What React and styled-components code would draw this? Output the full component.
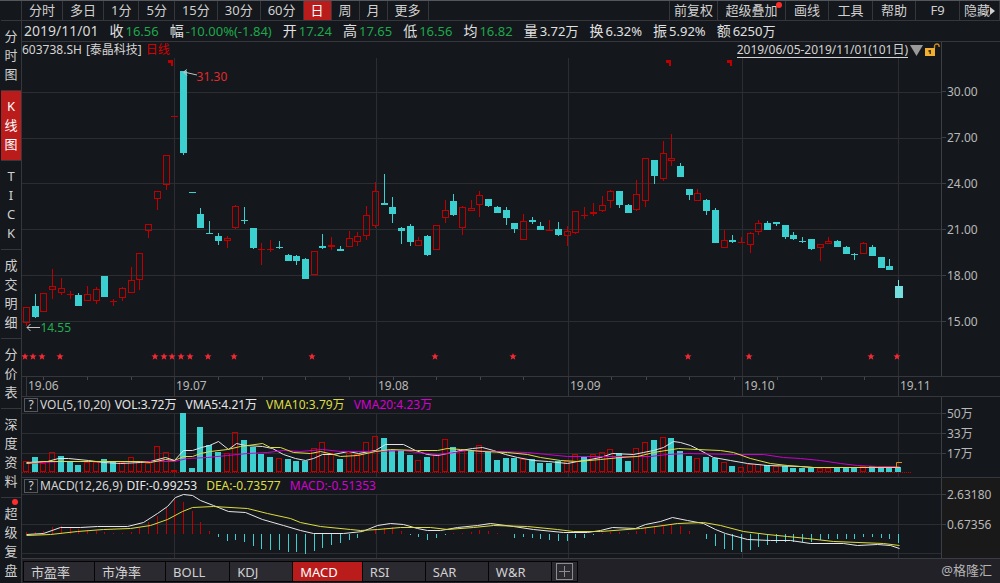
import React, { useState } from "react";
import styled, { createGlobalStyle, css } from "styled-components";

const UP = "#c00000";
const DOWN = "#3ccfcf";
const GRID = "#2b2d31";

const periods = ["分时", "多日", "1分", "5分", "15分", "30分", "60分", "日", "周", "月", "更多"];

const tools = [
  { name: "前复权", width: 48 },
  { name: "超级叠加", width: 68, isNew: true },
  { name: "画线", width: 43 },
  { name: "工具", width: 44 },
  { name: "帮助", width: 43 },
  { name: "F9", width: 44 },
  { name: "隐藏", width: 40, arrow: true },
];

const views = ["分时图", "K线图", "TICK", "成交明细", "分价表", "深度资料", "超级复盘"];

const indicators = ["市盈率", "市净率", "BOLL", "KDJ", "MACD", "RSI", "SAR", "W&R"];

const quote = [
  ["收", "16.56", "down"],
  ["幅", "-10.00%(-1.84)", "down"],
  ["开", "17.24", "down"],
  ["高", "17.65", "down"],
  ["低", "16.56", "down"],
  ["均", "16.82", "down"],
  ["量", "3.72万"],
  ["换", "6.32%"],
  ["振", "5.92%"],
  ["额", "6250万"],
];

// [색, 고가, 몸통 위, 몸통 아래, 저가]  u = 상승, d = 하락
const candles = [
  ["u", 307, 307, 323, 326], ["d", 294, 306, 317, 318], ["u", 293, 293, 312, 312], ["u", 269, 286, 290, 299],
  ["u", 278, 288, 293, 295], ["u", 291, 294, 295, 299], ["d", 293, 295, 306, 306], ["u", 286, 294, 301, 301],
  ["u", 287, 289, 301, 304], ["d", 276, 276, 297, 297], ["u", 299, 301, 302, 306], ["u", 287, 288, 298, 301],
  ["u", 267, 280, 293, 293], ["u", 253, 253, 280, 290], ["u", 224, 224, 231, 238], ["u", 191, 191, 199, 210],
  ["u", 155, 155, 185, 190], ["u", 116, 116, 117, 117], ["d", 71, 71, 153, 155], ["d", 192, 192, 193, 193],
  ["d", 208, 214, 228, 228], ["d", 221, 233, 234, 234], ["d", 233, 236, 241, 245], ["u", 236, 238, 241, 248],
  ["u", 205, 206, 228, 229], ["d", 207, 220, 221, 224], ["d", 228, 228, 248, 249], ["u", 243, 249, 250, 265],
  ["u", 240, 249, 250, 252], ["d", 241, 247, 248, 249], ["d", 254, 255, 261, 261], ["d", 255, 256, 261, 265],
  ["d", 258, 259, 279, 279], ["u", 251, 251, 275, 275], ["d", 234, 246, 248, 249], ["u", 237, 245, 247, 250],
  ["d", 246, 249, 251, 251], ["u", 231, 238, 247, 247], ["u", 232, 236, 242, 246], ["u", 206, 215, 236, 240],
  ["u", 182, 191, 226, 228], ["d", 174, 203, 205, 205], ["d", 197, 207, 214, 223], ["d", 227, 228, 231, 244],
  ["d", 224, 226, 242, 246], ["u", 237, 240, 246, 246], ["d", 235, 236, 255, 256], ["u", 225, 225, 250, 250],
  ["u", 200, 210, 218, 223], ["d", 194, 201, 215, 216], ["u", 206, 207, 228, 235], ["u", 200, 208, 211, 211],
  ["u", 191, 195, 205, 217], ["d", 199, 199, 206, 207], ["d", 206, 207, 213, 213], ["d", 207, 210, 218, 225],
  ["d", 223, 223, 229, 233], ["u", 214, 221, 240, 240], ["d", 217, 220, 222, 224], ["d", 222, 226, 230, 230],
  ["u", 220, 230, 231, 231], ["d", 222, 229, 235, 236], ["u", 226, 231, 236, 246], ["u", 211, 211, 233, 234],
  ["u", 207, 215, 216, 219], ["u", 203, 212, 214, 216], ["u", 196, 205, 211, 212], ["u", 190, 191, 201, 208],
  ["d", 191, 191, 205, 208], ["d", 204, 205, 213, 213], ["u", 180, 194, 210, 211], ["u", 158, 158, 201, 207],
  ["d", 160, 160, 176, 184], ["u", 141, 153, 179, 181], ["u", 134, 158, 161, 166], ["d", 163, 166, 177, 177],
  ["d", 189, 189, 195, 200], ["u", 189, 193, 201, 201], ["d", 199, 200, 211, 215], ["d", 208, 210, 243, 243],
  ["u", 230, 240, 248, 248], ["d", 235, 240, 242, 243], ["u", 237, 242, 243, 243], ["u", 232, 233, 245, 253],
  ["u", 220, 223, 232, 235], ["d", 221, 223, 230, 230], ["d", 222, 222, 224, 226], ["d", 225, 225, 237, 239],
  ["d", 232, 235, 239, 240], ["d", 237, 241, 242, 243], ["d", 239, 239, 249, 250], ["u", 244, 244, 248, 261],
  ["u", 237, 241, 244, 244], ["d", 240, 241, 247, 247], ["d", 246, 247, 254, 254], ["d", 253, 254, 255, 260],
  ["u", 242, 243, 254, 254], ["d", 245, 247, 256, 256], ["d", 257, 257, 268, 268], ["d", 259, 266, 270, 270],
  ["d", 280, 286, 298, 298],
];

const volumes =
  "u461 d457 u463 u452 d456 d461 d465 u462 u462 d459 d462 u462 u457 u462 u463 u446 u452 u470 d413 d468 " +
  "d427 d445 d452 u453 u432 d440 d447 d454 d457 u458 d459 d461 d461 u448 u442 u453 d459 u453 u454 u442 " +
  "u436 d438 d450 d450 d455 u460 d457 u454 u439 d447 u450 d450 u445 d452 d460 d458 d458 u459 d459 d463 " +
  "d463 d461 u461 u454 d456 u454 u452 u449 d453 d461 u448 u442 d440 u437 d438 d451 d456 u458 d457 d458 " +
  "u462 d466 u467 u464 u464 d465 u466 d466 d468 d468 d468 u468 u468 d467 d467 d467 u466 d466 d467 d467 d467";

const macdBars = [
  2, 2, 3, 7, 8, 7, 5, 4, 3, 2, 1, 1, 2, 6, 12, 18, 26, 34, 32, 23, 12, 3, -3, -7, -6, -8, -12, -15, -16, -16, -18,
  -18, -20, -17, -14, -11, -9, -6, -4, 0, 5, 6, 7, 3, -1, -3, -6, -4, -1, 1, 1, 2, 4, 3, 1, 0, -4, -3, -4, -5, -6,
  -7, -7, -4, -4, -1, 1, 2, 2, 1, 3, 7, 8, 10, 10, 8, 3, 0, -5, -12, -15, -16, -18, -16, -13, -11, -9, -8, -8, -8,
  -8, -6, -5, -5, -5, -5, -3, -3, -4, -5, -9,
];

const vma5 =
  "26,462 47,461 58,458 68,458 88,460 103,462 120,463 140,462 150,461 165,457 174,460 183,450 192,450 201,447 " +
  "209,445 218,441 228,449 236,443 245,445 262,446 272,448 283,454 295,458 305,460 313,458 322,454 333,454 " +
  "348,451 358,453 375,450 385,444 403,444 415,450 427,454 437,455 447,453 460,450 472,448 482,447 493,450 " +
  "505,454 517,457 533,460 548,461 567,463 577,461 590,459 600,457 612,453 633,454 643,452 653,450 663,447 " +
  "673,441 680,442 690,445 700,450 713,457 730,460 747,463 767,465 800,466 813,467 899,467";
const vma10 =
  "26,463 43,461 88,461 140,461 150,462 165,459 174,460 183,456 192,456 200,453 210,451 227,449 240,446 262,443 " +
  "270,447 280,447 293,452 310,453 320,451 333,454 340,456 357,455 375,451 390,449 417,450 437,450 447,448 " +
  "460,449 482,451 507,452 527,454 540,457 560,460 577,461 600,459 620,457 637,456 653,452 678,448 697,449 " +
  "720,450 733,452 750,458 770,463 787,465 813,467 899,467";
const vma20 =
  "26,463 60,461 100,461 147,461 174,461 187,458 207,457 227,455 247,453 267,452 283,450 300,451 322,449 340,451 " +
  "373,451 403,450 417,452 437,454 447,453 467,450 527,452 547,454 567,456 600,456 650,456 667,454 687,453 " +
  "733,454 763,454 783,457 800,458 820,460 840,463 857,465 877,466 899,466";
const dif =
  "26,534 43,533 60,527 80,527 97,526 127,526 143,522 157,513 167,506 175,497 183,494 192,495 200,500 213,505 " +
  "228,511 245,512 262,519 283,525 300,530 313,533 343,533 362,531 377,525 390,523 403,524 417,528 427,530 " +
  "440,530 457,527 477,525 490,523 513,526 533,529 563,532 587,532 600,530 612,527 635,528 645,524 660,521 " +
  "672,517 687,520 703,523 715,529 725,533 747,539 770,540 790,540 810,543 843,543 857,545 877,544 890,545 899,548";
const dea =
  "26,535 50,534 77,531 103,529 130,528 150,525 167,519 182,511 192,507 213,506 247,508 267,513 290,518 300,522 " +
  "320,526 350,529 360,530 377,529 400,527 430,527 447,529 473,527 493,525 527,526 557,529 573,531 600,531 " +
  "640,528 663,525 677,523 703,522 720,525 743,531 767,534 787,536 807,538 833,541 883,543 899,545";

const months = [174, 376, 568, 742, 898];
const minorTicks = [43, 87, 131, 218, 262, 305, 349, 393, 436, 480, 523, 611, 646, 689, 734, 777, 821, 864];
const stars = [25, 33, 42, 60, 155, 164, 172, 181, 190, 208, 234, 312, 435, 513, 688, 749, 871, 897];
const corners = [168, 666, 727];

const xOf = (i) => Math.round(26 + i * 8.72);

const Grid = ({ rows, top, height }) => (
  <g fill={GRID}>
    {rows.map((y) => (
      <rect key={y} x="22" y={y} width="919" height="1" />
    ))}
    {months.map((x) => (
      <rect key={x} x={x} y={top} width="1" height={height} />
    ))}
  </g>
);

const Candle = ({ index, data }) => {
  const [type, high, top, bottom, low] = data;
  const x = xOf(index);
  const last = index === candles.length - 1;
  const color = type === "u" ? UP : last ? "#74dede" : DOWN;
  const hollow = type === "u" && bottom - top > 2;
  return (
    <g fill={color}>
      {high < top && <rect x={x} y={high} width="1" height={top - high} />}
      {low > bottom && <rect x={x} y={bottom} width="1" height={low - bottom} />}
      {hollow ? (
        <rect x={x - 2.5} y={top + 0.5} width="6" height={bottom - top - 1} fill="none" stroke={color} />
      ) : (
        <rect x={x - 3} y={top} width={last ? 8 : 7} height={bottom - top} />
      )}
    </g>
  );
};

const PriceChart = () => (
  <C.Plot viewBox="22 58 919 318" preserveAspectRatio="none" role="img" aria-label="日线">
    <Grid rows={[92, 138, 183, 229, 275, 321]} top={58} height={318} />
    {candles.map((c, i) => (
      <Candle key={i} index={i} data={c} />
    ))}
    {corners.map((x) => (
      <path key={x} d={`M${x} 60h5v6h-2v-3h-3z`} fill={UP} />
    ))}
    {stars.map((x) => (
      <path
        key={x}
        d={`M${x} 353l1 2.2 2.6.2-2 1.7.7 2.7-2.3-1.5-2.3 1.5.7-2.7-2-1.7 2.6-.2z`}
        fill="#ee2a34"
      />
    ))}
    <g fill="none" stroke="#c4c4c4">
      <path d="M197 75L184 72M187 69.500L183.500 72L187 75.500" />
      <path d="M40 327.500H27M30.500 324L27 327.500L30.500 331" />
    </g>
  </C.Plot>
);

const VolumeChart = () => (
  <C.Plot viewBox="22 413 919 64" preserveAspectRatio="none" role="img" aria-label="VOL">
    <Grid rows={[413, 433, 453]} top={413} height={64} />
    {volumes.split(" ").map((v, i) => {
      const top = Number(v.slice(1));
      const x = xOf(i) - 3;
      return v[0] === "d" ? (
        <rect key={i} x={x} y={top} width="6" height={472 - top} fill={DOWN} />
      ) : (
        <rect key={i} x={x + 0.5} y={top + 0.5} width="5" height={471 - top} fill="none" stroke={UP} />
      );
    })}
    <path d="M22 472.500H912" stroke={UP} strokeDasharray="1 1" />
    <g fill="none" transform="translate(0.5 0.5)">
      <polyline points={vma5} stroke="#e2e2e2" />
      <polyline points={vma20} stroke="#cc00cc" />
      <polyline points={vma10} stroke="#dcdc3c" />
    </g>
    <path d="M896.500 467V462.500H902" fill="none" stroke="#e08a10" />
  </C.Plot>
);

const MacdChart = () => (
  <C.Plot viewBox="22 494 919 64" preserveAspectRatio="none" role="img" aria-label="MACD">
    <Grid rows={[494, 524, 553]} top={494} height={64} />
    {macdBars.map((v, i) => (
      <rect
        key={i}
        x={xOf(i)}
        y={v > 0 ? 534 - v : 534}
        width="1"
        height={Math.abs(v)}
        fill={v > 0 ? UP : DOWN}
      />
    ))}
    <g fill="none" transform="translate(0.5 0.5)">
      <polyline points={dif} stroke="#e6e6e6" />
      <polyline points={dea} stroke="#dcdc3c" />
    </g>
  </C.Plot>
);

const App = () => {
  const [period, setPeriod] = useState("日");
  const [view, setView] = useState("K线图");
  const [indicator, setIndicator] = useState("MACD");

  return (
    <>
      <GlobalStyle />
      <L.Page>
        <L.Sidebar>
          {views.map((name) => (
            <L.SideButton key={name} aria-label={name} $active={name === view} onClick={() => setView(name)}>
              {[...name].map((char, i) => (
                <span key={i}>{char}</span>
              ))}
              {name === "超级复盘" && <L.Dot />}
            </L.SideButton>
          ))}
        </L.Sidebar>

        <L.Main>
          <L.Toolbar>
            {periods.map((name) => (
              <L.ToolButton key={name} $active={name === period} onClick={() => setPeriod(name)}>
                {name}
              </L.ToolButton>
            ))}
            <L.Tools>
              {tools.map((tool) => (
                <L.ToolButton key={tool.name} $width={tool.width}>
                  {tool.name}
                  {tool.arrow && (
                    <svg width="5" height="8" viewBox="0 0 5 8">
                      <path d="M0 0L5 4L0 8z" fill="#d0d0d0" />
                    </svg>
                  )}
                  {tool.isNew && <L.Dot />}
                </L.ToolButton>
              ))}
            </L.Tools>
          </L.Toolbar>

          <L.Quote>
            <L.QuoteDate>2019/11/01</L.QuoteDate>
            {quote.map(([label, value, trend]) => (
              <L.QuoteItem key={label}>
                <span>{label}</span>
                <L.QuoteValue $trend={trend}>{value}</L.QuoteValue>
              </L.QuoteItem>
            ))}
          </L.Quote>

          <C.PricePane>
            <C.Body>
              <C.Header>
                <span>603738.SH</span>
                <C.StockName>[泰晶科技]</C.StockName>
                <C.Cycle>日线</C.Cycle>
                <C.Range>
                  <C.RangeButton>2019/06/05-2019/11/01(101日)</C.RangeButton>
                  <svg width="13" height="11" viewBox="0 0 13 11">
                    <path d="M0 0H13L6.5 11z" fill="#9a9a9a" />
                  </svg>
                  <svg width="16" height="14" viewBox="0 0 16 14">
                    <path d="M9.500 5V3.500Q9.500 1 12 1Q14.200 1 14.200 4" fill="none" stroke="#c98a1c" strokeWidth="1.4" />
                    <rect x="0" y="5" width="10" height="8" fill="#f2b030" />
                    <path d="M3.500 7H6V11H4.500V9H3.500z" fill="#4a3508" />
                  </svg>
                </C.Range>
              </C.Header>
              <C.PlotArea>
                <PriceChart />
                <C.Note $left="19%" $top="3%" $color="#e02a2e">
                  31.30
                </C.Note>
                <C.Note $left="2%" $top="82%" $color="#1eb050">
                  14.55
                </C.Note>
              </C.PlotArea>
            </C.Body>
            <C.PriceAxis>
              {["30.00", "27.00", "24.00", "21.00", "18.00", "15.00"].map((p) => (
                <C.AxisLabel key={p}>{p}</C.AxisLabel>
              ))}
            </C.PriceAxis>
          </C.PricePane>

          <C.TimeAxis>
            <C.Ticks viewBox="22 0 919 3" preserveAspectRatio="none">
              {minorTicks.map((x) => (
                <rect key={x} x={x} y="0" width="1" height="3" fill="#45474c" />
              ))}
            </C.Ticks>
            {["19.06", "19.07", "19.08", "19.09", "19.10", "19.11"].map((m) => (
              <C.Month key={m}>{m}</C.Month>
            ))}
          </C.TimeAxis>

          <C.SubPane>
            <C.Body>
              <C.Header>
                <C.Help aria-label="VOL ?">?</C.Help>
                <C.Formula>VOL(5,10,20)</C.Formula>
                <C.Value $color="#e6e6e6">VOL:3.72万</C.Value>
                <C.Value $color="#e6e6e6">VMA5:4.21万</C.Value>
                <C.Value $color="#dede40">VMA10:3.79万</C.Value>
                <C.Value $color="#d400d4">VMA20:4.23万</C.Value>
              </C.Header>
              <C.PlotArea>
                <VolumeChart />
              </C.PlotArea>
            </C.Body>
            <C.SubAxis $pad={6}>
              <C.AxisLabel $height={20}>50万</C.AxisLabel>
              <C.AxisLabel $height={20}>33万</C.AxisLabel>
              <C.AxisLabel $height={20}>17万</C.AxisLabel>
            </C.SubAxis>
          </C.SubPane>

          <C.SubPane>
            <C.Body>
              <C.Header>
                <C.Help aria-label="MACD ?">?</C.Help>
                <C.Formula>MACD(12,26,9)</C.Formula>
                <C.Value $color="#e6e6e6">DIF:-0.99253</C.Value>
                <C.Value $color="#dede40">DEA:-0.73577</C.Value>
                <C.Value $color="#d400d4">MACD:-0.51353</C.Value>
              </C.Header>
              <C.PlotArea>
                <MacdChart />
              </C.PlotArea>
            </C.Body>
            <C.SubAxis $pad={1} $focus>
              <C.AxisLabel $height={30}>2.63180</C.AxisLabel>
              <C.AxisLabel $height={30}>0.67356</C.AxisLabel>
            </C.SubAxis>
          </C.SubPane>

          <L.Footer>
            {indicators.map((name) => (
              <L.Tab key={name} $active={name === indicator} onClick={() => setIndicator(name)}>
                {name}
              </L.Tab>
            ))}
            <L.AddTab aria-label="+">
              <svg width="17" height="17" viewBox="0 0 17 17" fill="none" stroke="#8c8c90">
                <rect x="0.5" y="0.5" width="16" height="16" />
                <path d="M3 8.500H14M8.500 3V14" />
              </svg>
            </L.AddTab>
            <L.Source>@格隆汇</L.Source>
          </L.Footer>
        </L.Main>
      </L.Page>
    </>
  );
};

export default App;

const GlobalStyle = createGlobalStyle`
  * {
    box-sizing: border-box;
  }

  body {
    margin: 0;
    background: #14171b;
    color: #d0d0d0;
    font-family: "Noto Sans", "Noto Sans CJK SC", sans-serif;
    font-size: 12px;
  }

  button {
    margin: 0;
    padding: 0;
    border: none;
    background: none;
    color: inherit;
    font: inherit;
    cursor: pointer;
  }

  svg {
    display: block;
    flex: none;
  }
`;

const L = {
  Page: styled.div`
    display: flex;
    min-height: 100vh;
    border-top: 1px solid #55575e;
  `,

  Sidebar: styled.nav`
    flex: none;
    display: flex;
    flex-direction: column;
    width: 22px;
    padding: 19px 0 0 1px;
    border-right: 1px solid #35373c;
    max-height: calc(100vh - 1px);
    overflow: hidden;
  `,

  SideButton: styled.button`
    position: relative;
    flex: none;
    display: flex;
    flex-direction: column;
    align-items: center;
    padding: 6px 0;
    border-top: 1px solid #35373c;
    font-size: 13px;
    line-height: 19px;
    ${({ $active }) =>
      $active &&
      css`
        background: #ba1c1c;
        color: #fff;
      `}
  `,

  Dot: styled.i`
    position: absolute;
    top: 1px;
    right: 3px;
    width: 6px;
    height: 6px;
    border-radius: 50%;
    background: #ff2c2c;
  `,

  Main: styled.main`
    flex: 1;
    min-width: 0;
    display: flex;
    flex-direction: column;
  `,

  Toolbar: styled.div`
    display: flex;
    height: 20px;
    border-bottom: 1px solid #35373c;
  `,

  ToolButton: styled.button`
    position: relative;
    display: flex;
    justify-content: center;
    align-items: center;
    padding: 0 7px;
    border-right: 1px solid #35373c;
    font-size: 13px;
    line-height: 19px;
    white-space: nowrap;
    ${({ $width }) =>
      $width &&
      css`
        width: ${$width}px;
        padding: 0;
      `}
    ${({ $active }) =>
      $active &&
      css`
        background: #ba1c1c;
        color: #fff;
      `}
  `,

  Tools: styled.div`
    display: flex;
    margin-left: auto;
    border-left: 1px solid #35373c;
  `,

  Quote: styled.div`
    display: flex;
    align-items: center;
    gap: 11px;
    height: 21px;
    padding-left: 2px;
    border-bottom: 1px solid #35373c;
    color: #e0e0e0;
    font-size: 14px;
    line-height: 20px;
    white-space: nowrap;
  `,

  QuoteDate: styled.time`
    color: #d8d8d8;
  `,

  QuoteItem: styled.div`
    display: flex;
    align-items: baseline;
    gap: 2px;
  `,

  QuoteValue: styled.span`
    font-size: 13px;
    color: ${({ $trend }) => ($trend === "down" ? "#1ea84c" : "#e0e0e0")};
  `,

  Footer: styled.footer`
    display: flex;
    height: 25px;
    padding: 2px 8px 1px 1px;
    border-top: 1px solid #3a3c42;
    background: #222127;
  `,

  Tab: styled.button`
    min-width: 63px;
    padding: 0 24px 0 7px;
    border: 1px solid #050506;
    border-right: none;
    background: ${({ $active }) => ($active ? "#ba1c1c" : "#2b2a31")};
    color: ${({ $active }) => ($active ? "#fff" : "#d0d0d0")};
    font-size: 13px;
    line-height: 18px;
    text-align: left;
  `,

  AddTab: styled.button`
    padding: 0 4px;
    border: 1px solid #050506;
    background: #2b2a31;
  `,

  Source: styled.span`
    margin-left: auto;
    color: #b4b4b4;
    font-size: 13px;
    line-height: 18px;
  `,
};

const Pane = styled.section`
  display: grid;
  grid-template-columns: minmax(0, 1fr) 59px;
`;

const Axis = styled.div`
  display: flex;
  flex-direction: column;
  border-left: 1px solid #3c3e43;
`;

const C = {
  PricePane: styled(Pane)`
    flex: 1;
    min-height: 240px;
  `,

  SubPane: styled(Pane)`
    height: 81px;
    border-top: 1px solid #35373c;
  `,

  Body: styled.div`
    display: flex;
    flex-direction: column;
    min-width: 0;
  `,

  Header: styled.div`
    flex: none;
    display: flex;
    align-items: center;
    height: 16px;
    color: #d4d4d4;
    line-height: 16px;
    white-space: nowrap;
  `,

  StockName: styled.span`
    margin-left: 4px;
  `,

  Cycle: styled.span`
    margin-left: 4px;
    color: #d80000;
  `,

  Range: styled.div`
    display: flex;
    align-items: center;
    gap: 2px;
    margin-left: auto;
  `,

  RangeButton: styled.button`
    line-height: 15px;
    border-bottom: 1px solid #d4d4d4;
  `,

  PlotArea: styled.div`
    position: relative;
    flex: 1;
    min-height: 0;
    display: grid;
  `,

  Plot: styled.svg`
    width: 100%;
    height: 100%;
    min-height: 0;
  `,

  Note: styled.span`
    position: absolute;
    left: ${({ $left }) => $left};
    top: ${({ $top }) => $top};
    color: ${({ $color }) => $color};
    line-height: 18px;
  `,

  PriceAxis: styled(Axis)`
    padding: 27px 0 32px;
  `,

  SubAxis: styled(Axis)`
    padding-top: ${({ $pad }) => $pad}px;
    background: ${({ $focus }) => ($focus ? "#191919" : "none")};
  `,

  AxisLabel: styled.span`
    flex: ${({ $height }) => ($height ? `0 0 ${$height}px` : "1")};
    display: flex;
    align-items: center;
    gap: 1px;
    color: #b8b8b8;

    &::before {
      content: "";
      width: 4px;
      height: 1px;
      background: #3c3e43;
    }
  `,

  TimeAxis: styled.div`
    position: relative;
    display: grid;
    grid-template-columns: 4fr 148fr 202fr 192fr 174fr 156fr 43fr 59px;
    height: 20px;
    border-top: 1px solid #35373c;
  `,

  Ticks: styled.svg`
    position: absolute;
    left: 0;
    top: 0;
    width: calc(100% - 59px);
    height: 3px;
  `,

  Month: styled.span`
    min-width: 0;
    padding-left: 1px;
    border-left: 1px solid #35373c;
    color: #b8b8b8;
    line-height: 17px;
    white-space: nowrap;

    &:nth-of-type(1) {
      grid-column: 2;
    }
  `,

  Help: styled.button`
    width: 14px;
    height: 14px;
    margin: 0 2px;
    border: 1px solid #55575c;
    line-height: 12px;
  `,

  Formula: styled.span`
    margin-right: 4px;
  `,

  Value: styled.span`
    margin-right: 9px;
    color: ${({ $color }) => $color};
  `,
};
